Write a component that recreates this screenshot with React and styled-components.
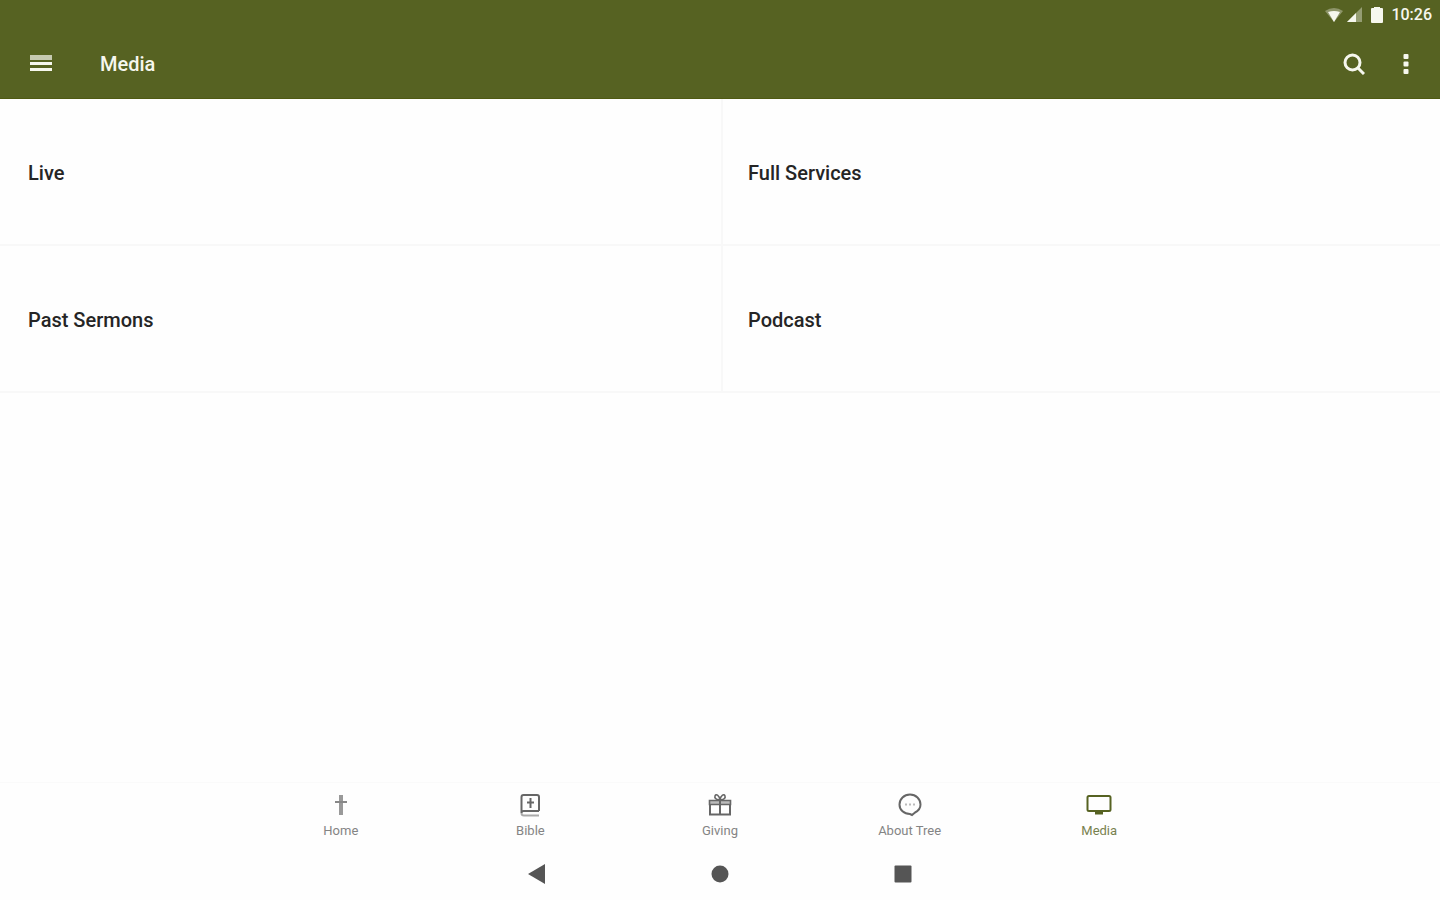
import styled, { createGlobalStyle } from 'styled-components';

const GlobalStyle = createGlobalStyle`
  * {
    box-sizing: border-box;
  }

  body {
    margin: 0;
    background-color: #fefefe;
    font-family: Roboto, sans-serif;
  }
`;

const Page = styled.div`
  display: flex;
  flex-direction: column;
  min-height: 100vh;
`;

const Header = styled.header`
  background-color: #566222;
  border-bottom: 1px solid #4f5a12;
  color: #f6f7ee;
`;

const StatusBar = styled.div`
  display: flex;
  align-items: center;
  justify-content: flex-end;
  height: 30px;
  padding-right: 8px;
`;

const StatusIcon = styled.svg`
  width: 18px;
  height: 18px;
  margin-right: ${({ $gap }) => $gap || 4}px;
`;

const Clock = styled.time`
  font-size: 16px;
  font-weight: 500;
  line-height: 20px;
`;

const AppBar = styled.div`
  display: flex;
  align-items: center;
  height: 68px;
  padding: 0 8px 0 16px;
`;

const IconButton = styled.button`
  display: flex;
  align-items: center;
  justify-content: center;
  width: ${({ $width }) => $width || 52}px;
  height: 48px;
  padding: 0;
  border: none;
  background: none;
  color: inherit;
`;

const Title = styled.h1`
  flex: 1;
  margin: 0 0 0 34px;
  font-size: 20px;
  font-weight: 500;
  line-height: 24px;
`;

const Main = styled.main`
  flex: 1;
`;

const Sections = styled.ul`
  display: grid;
  grid-template-columns: 1fr 1fr;
  margin: 0;
  padding: 0;
  list-style: none;
`;

const Section = styled.li`
  border-bottom: 2px solid #f8f8f8;

  &:nth-child(odd) {
    border-right: 2px solid #f8f8f8;
    margin-right: -3px;
  }

  &:nth-child(even) {
    margin-left: 3px;
  }
`;

const SectionLink = styled.a`
  display: flex;
  align-items: center;
  height: 145px;
  padding: 3px 28px 0;
  color: #252525;
  font-size: 20px;
  font-weight: 500;
  line-height: 24px;
  text-decoration: none;

  ${Section}:nth-child(even) & {
    padding-left: 25px;
  }
`;

const TabBar = styled.nav`
  display: flex;
  justify-content: center;
  height: 65px;
  border-top: 1px solid #fafafa;
`;

const Tabs = styled.div`
  display: grid;
  grid-template-columns: repeat(5, 1fr);
  width: 100%;
  max-width: 948px;
`;

const Tab = styled.a`
  display: flex;
  flex-direction: column;
  align-items: center;
  padding-top: 10px;
  color: ${({ $active }) => ($active ? '#566222' : '#666')};
  text-decoration: none;
`;

const TabLabel = styled.span`
  margin-top: 5px;
  font-size: 13px;
  line-height: 18px;
  opacity: 0.8;
`;

const SystemBar = styled.div`
  display: grid;
  grid-template-columns: repeat(3, 183px);
  justify-content: center;
  height: 53px;
`;

const SystemButton = styled.button`
  display: flex;
  align-items: center;
  justify-content: center;
  padding: 0;
  border: none;
  background: none;
  color: #555;
`;

const TabIcon = ({ children }) => (
  <svg
    width="26"
    height="24"
    viewBox="0 0 26 24"
    fill="none"
    stroke="currentColor"
    strokeWidth="2"
    aria-hidden="true"
  >
    {children}
  </svg>
);

const sections = ['Live', 'Full Services', 'Past Sermons', 'Podcast'];

const tabs = [
  {
    label: 'Home',
    icon: (
      <g>
        <path d="M13 2v20" stroke="#999" strokeWidth="4" />
        <path d="M7 9h12" stroke="#888" strokeWidth="2" />
      </g>
    ),
  },
  {
    label: 'Bible',
    icon: (
      <>
        <path d="M22 18H6.500a2 2 0 0 0-2 2V4a2 2 0 0 1 2-2H20a2 2 0 0 1 2 2v14" />
        <path d="M4.500 20q0 2.500 2.500 2.500H22" stroke="#aaa" />
        <path d="M13.500 5v10M10 9.500h7" />
      </>
    ),
  },
  {
    label: 'Giving',
    icon: (
      <>
        <path d="M2.500 7.500h21v4h-21z" fill="#bbb" strokeWidth="1.600" />
        <path d="M3 12v9.500h20V12M13 8v13" strokeWidth="2" />
        <path
          d="M13 7C10 7 7 5.500 8 3S12 2 13 7c1-5 4-6.500 5-4S16 7 13 7z"
          strokeWidth="1.600"
        />
      </>
    ),
  },
  {
    label: 'About Tree',
    icon: (
      <>
        <path
          d="M13 1.500c6 0 10.500 4.500 10.500 10 0 4-2.500 6.500-5.500 8L15 22l-2-1C7 21 2.500 17 2.500 11.500S7 1.500 13 1.500z"
          strokeWidth="2"
        />
        <path d="M8 11.500h2M12 11.500h2M16 11.500h2" stroke="#bbb" />
      </>
    ),
  },
  {
    label: 'Media',
    active: true,
    icon: (
      <>
        <rect x="1.500" y="3" width="23" height="15" rx="1.500" />
        <path d="M9 20h8" strokeWidth="3" />
      </>
    ),
  },
];

const App = () => {
  return (
    <Page>
      <GlobalStyle />
      <Header>
        <StatusBar>
          <StatusIcon
            viewBox="0 0 18 18"
            fill="currentColor"
            aria-hidden="true"
            $gap={3}
          >
            <path d="M0 5Q9-1 18 5L9 16z" opacity="0.35" />
            <path d="M3 6q6-2 12 0L9 16z" />
          </StatusIcon>
          <StatusIcon
            viewBox="0 0 18 18"
            fill="currentColor"
            aria-hidden="true"
          >
            <path d="M1 16 16 1v15z" opacity="0.4" />
            <path d="M1 16 10 7v9z" />
          </StatusIcon>
          <StatusIcon
            viewBox="0 0 18 18"
            fill="currentColor"
            aria-hidden="true"
            $gap={5}
          >
            <path d="M4 2h2V1h6v1h2q1 0 1 1v13q0 1-1 1H4q-1 0-1-1V3q0-1 1-1z" />
          </StatusIcon>
          <Clock>10:26</Clock>
        </StatusBar>
        <AppBar>
          <IconButton type="button" aria-label="Open menu" $width={50}>
            <svg width="22" height="20" viewBox="0 0 22 20" fill="currentColor">
              <path d="M0 1h22v5H0z" opacity="0.7" />
              <path d="M0 8h22v3H0zM0 14h22v3H0z" />
            </svg>
          </IconButton>
          <Title>Media</Title>
          <IconButton type="button" aria-label="Search">
            <svg
              width="22"
              height="22"
              viewBox="0 0 22 22"
              fill="none"
              stroke="currentColor"
              strokeWidth="3"
            >
              <circle cx="9.500" cy="9.500" r="7.500" />
              <path d="m15 15 6 6" />
            </svg>
          </IconButton>
          <IconButton type="button" aria-label="More options">
            <svg width="6" height="20" viewBox="0 0 6 20" fill="currentColor">
              <rect x="0.500" width="5" height="5" rx="1" />
              <rect x="0.500" y="7.500" width="5" height="5" rx="1" />
              <rect x="0.500" y="15" width="5" height="5" rx="1" />
            </svg>
          </IconButton>
        </AppBar>
      </Header>
      <Main>
        <Sections>
          {sections.map((name) => (
            <Section key={name}>
              <SectionLink href="#">{name}</SectionLink>
            </Section>
          ))}
        </Sections>
      </Main>
      <TabBar>
        <Tabs>
          {tabs.map(({ label, icon, active }) => (
            <Tab key={label} href="#" $active={active}>
              <TabIcon>{icon}</TabIcon>
              <TabLabel>{label}</TabLabel>
            </Tab>
          ))}
        </Tabs>
      </TabBar>
      <SystemBar>
        <SystemButton type="button" aria-label="Back">
          <svg width="18" height="20" viewBox="0 0 18 20" fill="currentColor">
            <path d="M0 10 17 0v20z" />
          </svg>
        </SystemButton>
        <SystemButton type="button" aria-label="Home screen">
          <svg width="18" height="18" viewBox="0 0 18 18" fill="currentColor">
            <circle cx="9" cy="9" r="8.500" />
          </svg>
        </SystemButton>
        <SystemButton type="button" aria-label="Recent apps">
          <svg width="18" height="18" viewBox="0 0 18 18" fill="currentColor">
            <rect x="0.500" y="0.500" width="17" height="17" rx="1" />
          </svg>
        </SystemButton>
      </SystemBar>
    </Page>
  );
};

export default App;
